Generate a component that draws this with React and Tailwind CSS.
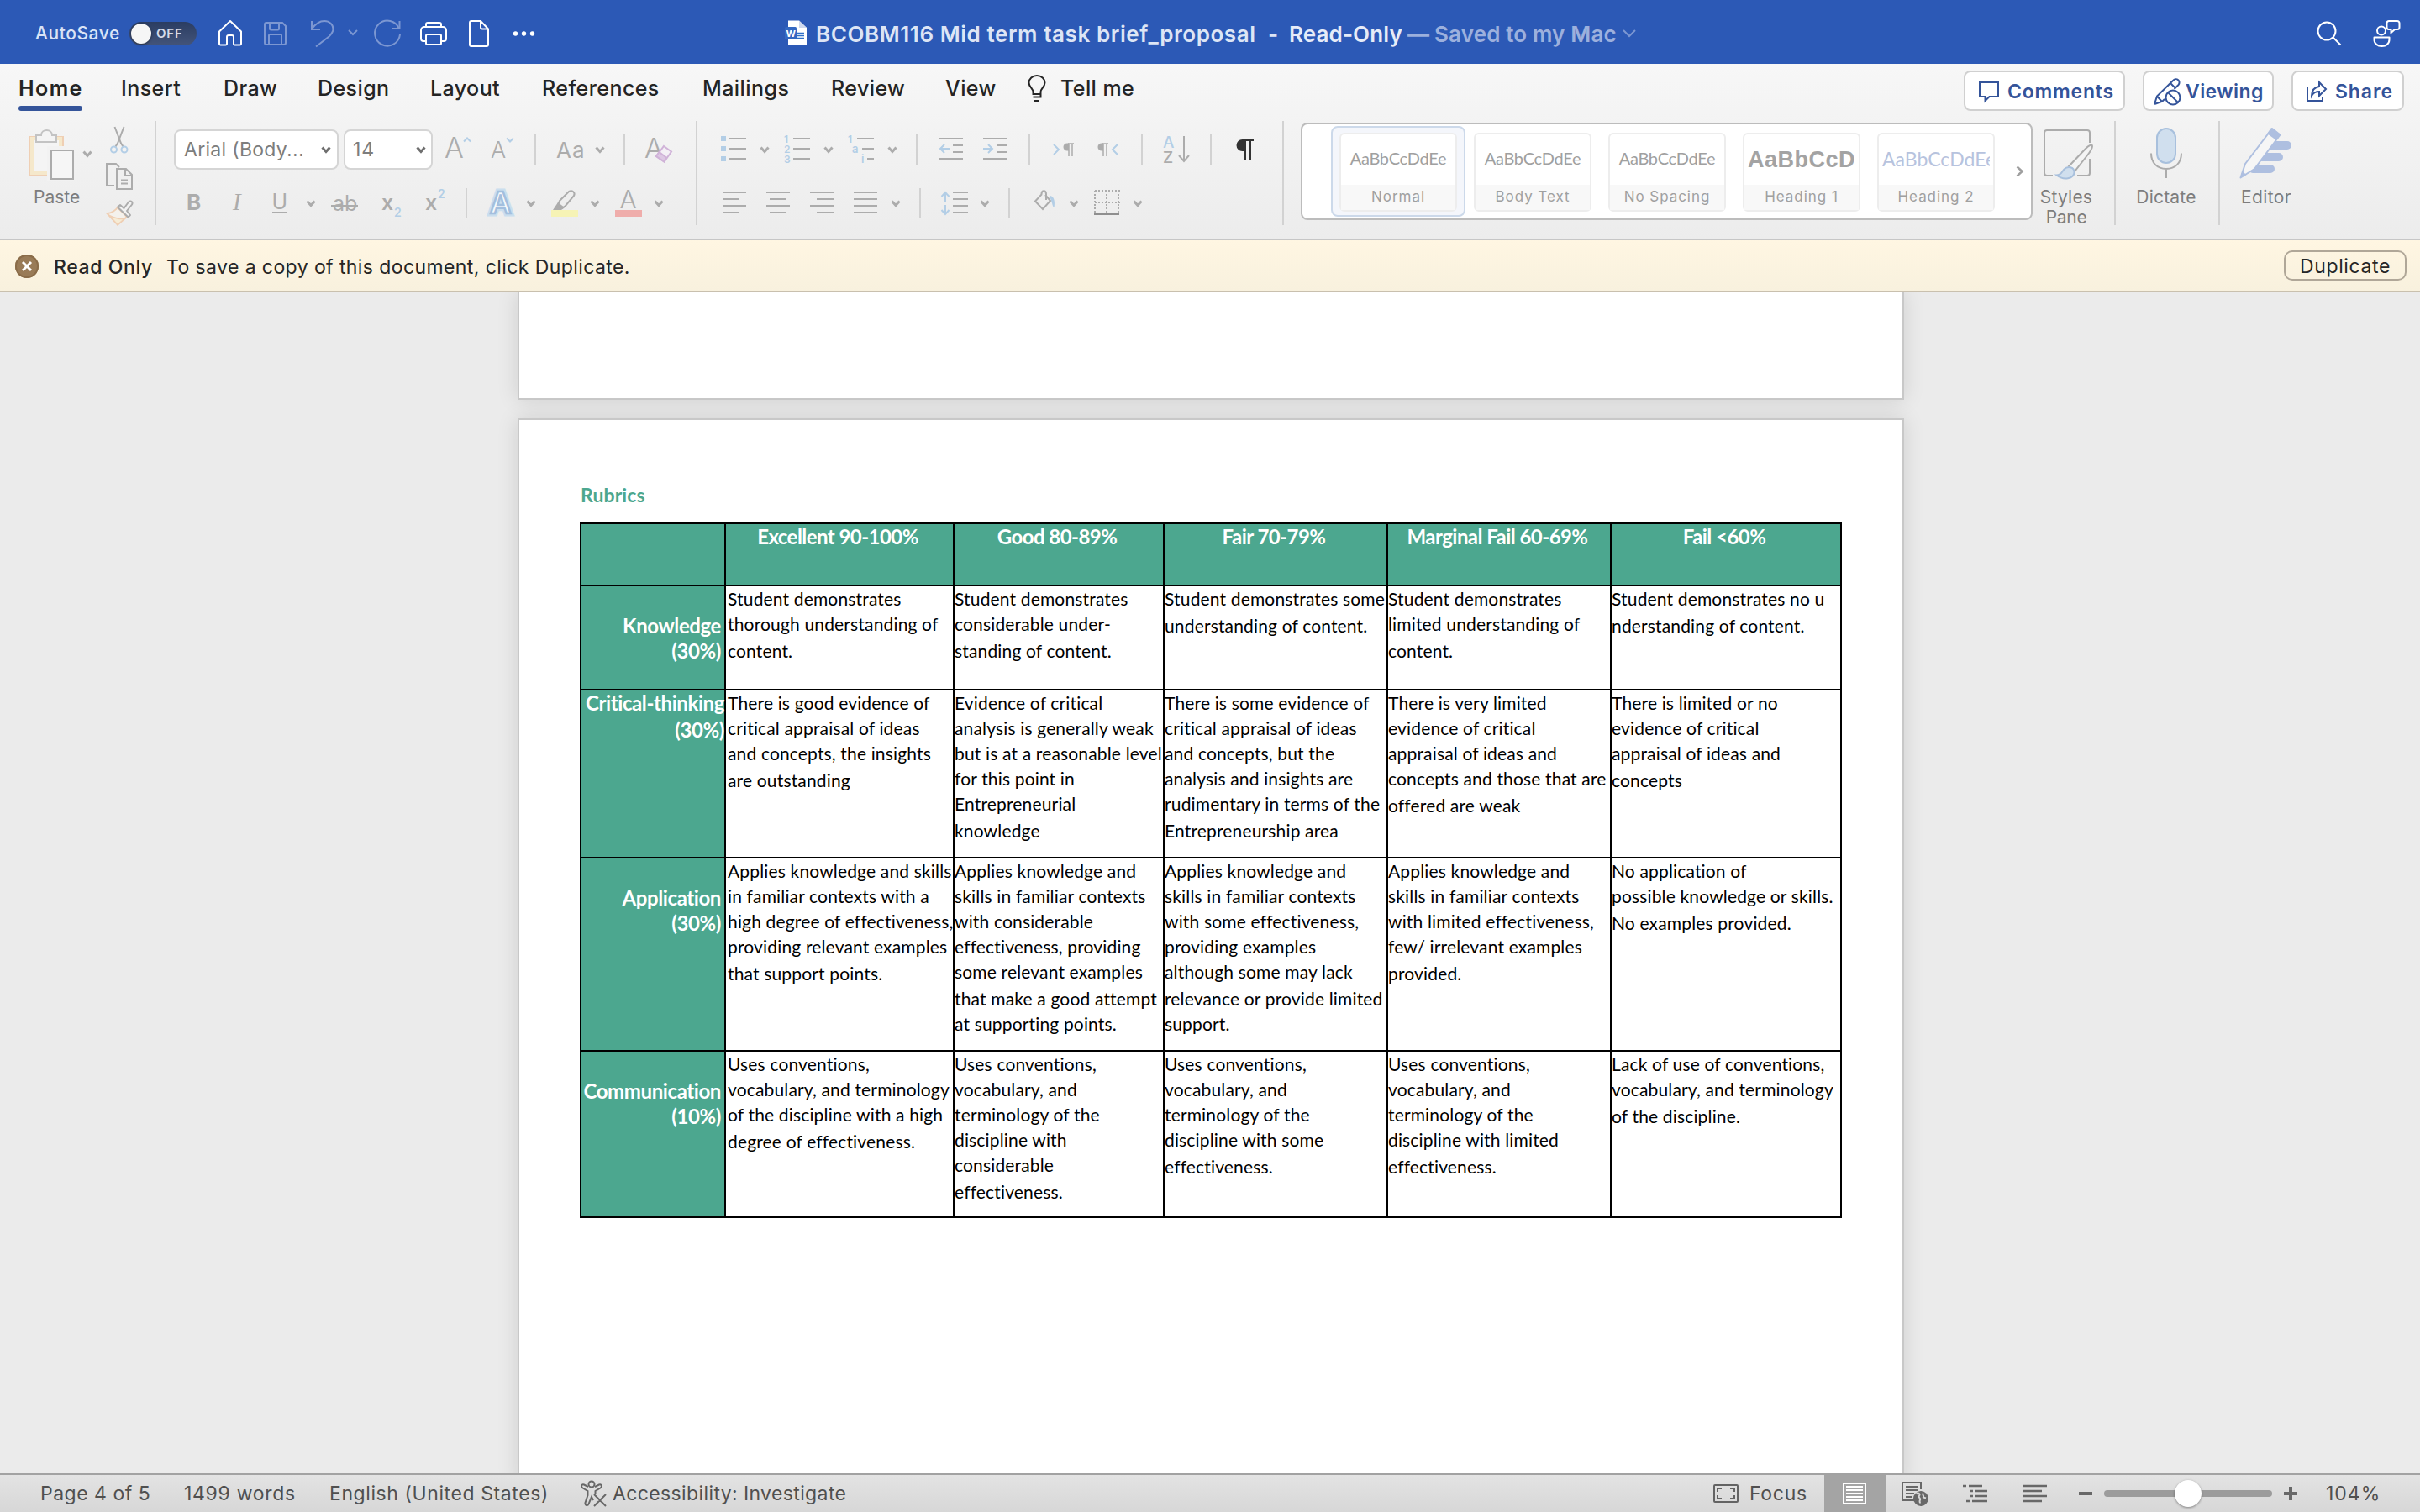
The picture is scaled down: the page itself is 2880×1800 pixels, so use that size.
const GREY = "#acacac";
const BLUE = "#b3cee6";

const columns = ["", "Excellent 90-100%", "Good 80-89%", "Fair 70-79%", "Marginal Fail 60-69%", "Fail <60%"];

// Every cell is a list of paragraphs, every paragraph a list of lines
const rubric = [
  {
    name: ["Knowledge", "(30%)"],
    height: "h-[124px]",
    cells: [
      [["Student demonstrates", "thorough understanding of"], ["content."]],
      [["Student demonstrates", "considerable under-"], ["standing of content."]],
      [["Student demonstrates some"], ["understanding of content."]],
      [["Student demonstrates", "limited understanding of"], ["content."]],
      [["Student demonstrates no u"], ["nderstanding of content."]],
    ],
  },
  {
    name: ["Critical-thinking", "(30%)"],
    tight: true,
    height: "h-[200px]",
    cells: [
      [["There is good evidence of", "critical appraisal of ideas", "and concepts, the insights"], ["are outstanding"]],
      [
        ["Evidence of critical", "analysis is generally weak", "but is at a reasonable level", "for this point in", "Entrepreneurial"],
        ["knowledge"],
      ],
      [
        ["There is some evidence of", "critical appraisal of ideas", "and concepts, but the", "analysis and insights are", "rudimentary in terms of the"],
        ["Entrepreneurship area"],
      ],
      [["There is very limited", "evidence of critical", "appraisal of ideas and", "concepts and those that are"], ["offered are weak"]],
      [["There is limited or no", "evidence of critical", "appraisal of ideas and"], ["concepts"]],
    ],
  },
  {
    name: ["Application", "(30%)"],
    height: "h-[230px]",
    cells: [
      [
        ["Applies knowledge and skills", "in familiar contexts with a", "high degree of effectiveness,", "providing relevant examples"],
        ["that support points."],
      ],
      [
        ["Applies knowledge and", "skills in familiar contexts", "with considerable", "effectiveness, providing", "some relevant examples"],
        ["that make a good attempt", "at supporting points."],
      ],
      [
        ["Applies knowledge and", "skills in familiar contexts", "with some effectiveness,", "providing examples", "although some may lack"],
        ["relevance or provide limited", "support."],
      ],
      [["Applies knowledge and", "skills in familiar contexts", "with limited effectiveness,", "few/ irrelevant examples"], ["provided."]],
      [["No application of", "possible knowledge or skills."], ["No examples provided."]],
    ],
  },
  {
    name: ["Communication", "(10%)"],
    height: "h-[198px]",
    cells: [
      [["Uses conventions,", "vocabulary, and terminology", "of the discipline with a high"], ["degree of effectiveness."]],
      [["Uses conventions,", "vocabulary, and", "terminology of the", "discipline with", "considerable"], ["effectiveness."]],
      [["Uses conventions,", "vocabulary, and", "terminology of the", "discipline with some"], ["effectiveness."]],
      [["Uses conventions,", "vocabulary, and", "terminology of the", "discipline with limited"], ["effectiveness."]],
      [["Lack of use of conventions,", "vocabulary, and terminology"], ["of the discipline."]],
    ],
  },
];

const Icon = ({ className = "", w = 32, h = 32, stroke = GREY, sw = 2, children }) => (
  <svg
    width={w}
    height={h}
    viewBox={`0 0 ${w} ${h}`}
    fill="none"
    stroke={stroke}
    strokeWidth={sw}
    className={`shrink-0 overflow-visible ${className}`}
  >
    {children}
  </svg>
);

const Glyph = ({ x, y, size, fill = GREY, weight = 400, family = "Inter", italic, children }) => (
  <text
    x={x}
    y={y}
    fontSize={size}
    fill={fill}
    stroke="none"
    fontWeight={weight}
    fontFamily={family}
    fontStyle={italic ? "italic" : "normal"}
  >
    {children}
  </text>
);

const Chevron = ({ className = "", stroke = GREY }) => (
  <Icon w={12} h={12} stroke={stroke} sw={3} className={className}>
    <path d="M1.5 3.5 6 8.5l4.5-5" />
  </Icon>
);

const Rule = ({ className = "" }) => <div className={`h-9 w-0.5 shrink-0 bg-[#d2d2d2] ${className}`} />;

const GroupRule = ({ className = "" }) => <div className={`h-[124px] w-0.5 shrink-0 bg-[#d2d2d2] ${className}`} />;

const TitleBar = () => (
  <header className="flex h-[76px] items-center bg-[#2c59b6] pt-1 pr-6 pl-[42px] text-[26px] leading-8 font-semibold whitespace-nowrap">
    <span className="w-28 text-[21px] font-medium tracking-[0.57px] text-[#dae3f5]">AutoSave</span>
    <div className="flex h-7 w-20 items-center rounded-full bg-linear-to-b from-[#2b3d62] to-[#43547a] pl-0.5">
      <div className="size-6 rounded-full bg-[#f6f6f6] shadow-[0_1px_3px_rgba(0,0,0,0.5)]" />
      <span className="ml-1.5 text-[15px] tracking-[0.8px] text-[#d5dbe8]">OFF</span>
    </div>

    <Icon stroke="#fff" className="ml-6">
      <path d="M3 13.5 16 1l13 12.5V28a1.5 1.5 0 0 1-1.500 1.500H21.500A1.500 1.500 0 0 1 20 28v-8a2 2 0 0 0-2-2h-4a2 2 0 0 0-2 2v8a1.500 1.500 0 0 1-1.500 1.500H4.500A1.500 1.500 0 0 1 3 28z" strokeLinejoin="round" />
    </Icon>
    <Icon stroke="#7c97d2" className="ml-[22px]">
      <path d="M5 3h19l4 4v20a2 2 0 0 1-2 2H5a2 2 0 0 1-2-2V5a2 2 0 0 1 2-2z" />
      <path d="M9 3v7a1.500 1.500 0 0 0 1.500 1.500h8A1.500 1.500 0 0 0 20 10V3M8 29V18a1 1 0 0 1 1-1h13a1 1 0 0 1 1 1v11" />
    </Icon>
    <Icon stroke="#7c97d2" className="ml-6">
      <path d="M3 1v10h10" />
      <path d="M3 10.500C7 5 12 1 18 1c6 0 10.500 4 10.500 9.500 0 4-2.500 6.500-5 9L8 31.500" />
    </Icon>
    <Icon w={12} h={12} stroke="#7c97d2" className="ml-3.5">
      <path d="m1 2 5 5 5-5" />
    </Icon>
    <Icon stroke="#7c97d2" className="ml-[19px]">
      <path d="M30.500 1v9h-9" />
      <path d="M30 10A15 15 0 1 0 31 17" />
    </Icon>
    <Icon stroke="#fff" className="ml-[23px]">
      <path d="M7 9V5a2 2 0 0 1 2-2h14a2 2 0 0 1 2 2v4M7 25H4a3 3 0 0 1-3-3V12a4 4 0 0 1 4-4h22a4 4 0 0 1 4 4v10a3 3 0 0 1-3 3h-3" />
      <rect x="7" y="17" width="18" height="12" rx="1.500" />
    </Icon>
    <Icon stroke="#fff" className="ml-[22px]">
      <path d="M7 1h11l9 9.500V29a2 2 0 0 1-2 2H7a2 2 0 0 1-2-2V3a2 2 0 0 1 2-2zM18 1v7.500a2 2 0 0 0 2 2h7" />
    </Icon>
    <Icon stroke="none" className="ml-[22px]">
      <g fill="#fff">
        <circle cx="5.500" cy="16" r="2.700" />
        <circle cx="15.500" cy="16" r="2.700" />
        <circle cx="25.500" cy="16" r="2.700" />
      </g>
    </Icon>

    <Icon w={26} stroke="none" className="ml-[294px]">
      <path d="M4 0.500h13l9 8.500v21H4z" fill="#fff" />
      <path d="M17 0.500V9h9z" fill="#cfd9ee" />
      <path d="M15 15.500h8M15 18.500h8M15 21.500h8" stroke="#2f6fc8" strokeWidth="1.500" />
      <rect x="0" y="8" width="14" height="15" rx="1.500" fill="#3468c2" />
      <Glyph x="1.500" y="19.500" size="11" weight="700" fill="#fff">W</Glyph>
    </Icon>
    <span className="ml-[11px] w-[538px] pt-px tracking-[0.57px] text-[#dde5f5]">BCOBM116 Mid term task brief_proposal</span>
    <span className="w-[25px] pt-px text-[#dde5f5]">-</span>
    <span className="w-[141px] pt-px tracking-[0.12px] text-[#e6ecf8]">Read-Only</span>
    <span className="w-8 pt-px text-[#9cb0dd]">—</span>
    <span className="w-[223px] pt-px tracking-[0.15px] text-[#9cb0dd]">Saved to my Mac</span>
    <Icon w={18} h={12} stroke="#7c97d2">
      <path d="m2 2 7 7 7-7" />
    </Icon>

    <Icon stroke="#fff" className="ml-auto">
      <circle cx="13" cy="13" r="10.500" />
      <path d="m20.500 20.500 9 9" />
    </Icon>
    <Icon stroke="#fff" className="ml-9">
      <circle cx="10" cy="12.500" r="5" />
      <path d="M1.500 20.500h18v2.500c0 5-4 8-9 8s-9-3-9-8z" strokeLinejoin="round" />
      <path d="M19 1h10a2.500 2.500 0 0 1 2.500 2.500v5A2.500 2.500 0 0 1 29 11h-3l-4.500 4v-4H19a2.500 2.500 0 0 1-2.500-2.500v-5A2.500 2.500 0 0 1 19 1z" />
    </Icon>
  </header>
);

const Tab = ({ className, children }) => (
  <span className={`shrink-0 tracking-[0.42px] ${className}`}>{children}</span>
);

const ActionButton = ({ className, children }) => (
  <button
    className={`flex h-12 shrink-0 items-center rounded-lg border-2 border-[#d0d0d0] bg-white pt-0.5 text-[23px] font-semibold text-[#34549a] ${className}`}
  >
    {children}
  </button>
);

const Tabs = () => (
  <nav className="flex h-[68px] items-start pr-[19px] pl-[22px] text-[25px] leading-8 font-medium whitespace-nowrap text-[#242424]">
    <div className="flex pt-[13px]">
      <div className="w-[122px] font-semibold">
        <span className="block tracking-[1.4px]">Home</span>
        <div className="mt-[5px] h-1.5 w-[76px] rounded-full bg-[#34549a]" />
      </div>
      <Tab className="w-[122px]">Insert</Tab>
      <Tab className="w-28">Draw</Tab>
      <Tab className="w-[134px]">Design</Tab>
      <Tab className="w-[133px]">Layout</Tab>
      <Tab className="w-[191px]">References</Tab>
      <Tab className="w-[153px]">Mailings</Tab>
      <Tab className="w-[136px]">Review</Tab>
      <Tab className="w-[98px]">View</Tab>
      <Icon w={22} stroke="#242424" className="mr-[17px]">
        <path d="M6.500 23v-2.500C6.500 16 1.500 14.500 1.500 9.500a9.500 8.500 0 0 1 19 0c0 5-5 6.500-5 11V23zM6.500 26.500h9V23M8 31h6" />
      </Icon>
      <Tab className="w-[90px]">Tell me</Tab>
    </div>

    <div className="ml-auto flex gap-[21px] pt-2">
      <ActionButton className="w-48 gap-2.5 pl-4 tracking-[0.8px]">
        <Icon w={24} h={26} stroke="#34549a">
          <path d="M1 2h22v17H12.500l-5 5v-5H1z" />
        </Icon>
        Comments
      </ActionButton>
      <ActionButton className="w-[156px] gap-1.5 pl-[11px] tracking-[0.43px]">
        <Icon stroke="#34549a">
          <path d="M1 31 4 21.500 23.500 2.500a4 4 0 0 1 6 5.500l-5 5M1 31l9-3 3-3M4 21.500l6 6.500M20 6l6 6" />
          <circle cx="23" cy="23" r="8.500" />
          <path d="m17 17 12 12" />
        </Icon>
        Viewing
      </ActionButton>
      <ActionButton className="w-[134px] gap-2.5 pl-4 tracking-[0.9px]">
        <Icon w={24} h={26} stroke="#34549a">
          <path d="M1 8v16h18v-5" />
          <path d="M15 2v5C9 8 6 12 6 18c2-3.500 5-5 9-5v5l8-8z" />
        </Icon>
        Share
      </ActionButton>
    </div>
  </nav>
);

const PasteGroup = () => (
  <div className="flex w-[184px] shrink-0">
    <div className="ml-[30px] flex w-[66px] flex-col items-start pt-2">
      <Icon w={64} h={64}>
        <rect x="5" y="11" width="40" height="46" fill="#f4f4f4" stroke="#efcfb4" />
        <rect x="8" y="13" width="34" height="41" stroke="#f5e8cb" strokeWidth="4" />
        <rect x="26" y="22" width="32" height="42" fill="#f2f2f2" stroke="none" />
        <path d="M13 9h6c0-8 13-8 13 0h5v8H13z" fill="#f4f4f4" stroke="#c3c3c3" />
        <rect x="31" y="27" width="26" height="34" fill="#f6f6f6" />
      </Icon>
      <span className="mt-[7px] ml-2.5 text-[21px] leading-6 text-[#7d7d7d]">Paste</span>
    </div>
    <Chevron className="mt-[33px] ml-0.5" />
    <div className="ml-4 flex flex-col gap-3 pt-1.5">
      <Icon>
        <path d="M10.500 1 18 20.500 20.500 24.500M21.500 1 14 20.500 11.500 24.500" />
        <circle cx="9.500" cy="28" r="3.500" stroke={BLUE} />
        <circle cx="22" cy="28" r="3.500" stroke={BLUE} />
      </Icon>
      <Icon>
        <path d="M10 27H1V1h11l4 4" />
        <path d="M13 7h11l7 7v17H13zM23 7v8h8M18 20.500h8M18 24.500h8" />
      </Icon>
      <Icon>
        <path d="M14 9C11 13 7 15.500 1.500 16L14 29.500l11-9.500z" fill="#f4f1ec" stroke="#efcfb4" />
        <path d="M4 18.500c5 2.500 11 4.500 18 4l-8 7z" fill="#f6ecd6" stroke="#efcfb4" strokeWidth="1.500" />
        <path d="m14 8.500 3-2.500 4.500 4 5.500-7.500c3-2.500 5.500 0 4 3L25 13l4 5-2.500 2.500z" fill="#f2f2f2" strokeLinejoin="round" />
      </Icon>
    </div>
  </div>
);

const FontGroup = () => (
  <div className="flex w-[642px] shrink-0 flex-col text-[23px] text-[#7d7d7d]">
    <div className="mt-2.5 flex h-12 items-center pl-[21px]">
      <div className="flex h-12 w-[196px] items-center justify-between rounded-lg border-2 border-[#d5d5d5] bg-white pr-[7px] pl-2.5 tracking-[0.3px]">
        Arial (Body...
        <Chevron stroke="#6f6f6f" />
      </div>
      <div className="ml-1.5 flex h-12 w-[106px] items-center justify-between rounded-lg border-2 border-[#d5d5d5] bg-white pr-1.5 pl-[9px] tracking-[0.8px]">
        14
        <Chevron stroke="#6f6f6f" />
      </div>
      <Icon className="ml-3.5">
        <Glyph x="0" y="26" size="34" weight="300">A</Glyph>
        <path d="m23 6.500 4-4 4 4" stroke={BLUE} />
      </Icon>
      <Icon className="ml-[22px]">
        <Glyph x="1" y="26" size="27" weight="300">A</Glyph>
        <path d="m20 2.500 4 4 4-4" stroke={BLUE} />
      </Icon>
      <Rule className="ml-[21px]" />
      <Icon w={36} className="ml-6">
        <Glyph x="0" y="26" size="26">A</Glyph>
        <Glyph x="19" y="26" size="26">a</Glyph>
      </Icon>
      <Chevron className="ml-2.5" />
      <Rule className="ml-[22px]" />
      <Icon className="ml-6">
        <Glyph x="-1" y="26" size="33" weight="300">A</Glyph>
        <path d="m22 12 9 6.500-8.500 12L13 24z" fill="#f4f0f5" stroke="#d0b3d8" />
        <path d="m16.500 19 8.500 6.500-2.500 5L13 24z" fill="#ddc8e3" stroke="#d0b3d8" />
      </Icon>
    </div>

    <div className="mt-[22px] flex h-9 items-center pl-7">
      <Icon>
        <Glyph x="8" y="24" size="26" weight="700">B</Glyph>
      </Icon>
      <Icon className="ml-5">
        <Glyph x="11" y="24" size="29" italic family="Liberation Serif">I</Glyph>
      </Icon>
      <Icon className="ml-[19px]">
        <Glyph x="6.500" y="23" size="25">U</Glyph>
        <path d="M7 27h18" />
      </Icon>
      <Chevron className="ml-[15px]" />
      <Icon className="ml-[18px]">
        <Glyph x="2" y="25" size="25">ab</Glyph>
        <path d="M0 19h32" />
      </Icon>
      <Icon className="ml-[25px]">
        <Glyph x="3" y="24" size="25" weight="600">x</Glyph>
        <Glyph x="18" y="32" size="14" fill={BLUE} weight="600">2</Glyph>
      </Icon>
      <Icon className="ml-5">
        <Glyph x="3" y="24" size="25" weight="600">x</Glyph>
        <Glyph x="18" y="10" size="14" fill={BLUE} weight="600">2</Glyph>
      </Icon>
      <Rule className="ml-[19px]" />
      <Icon className="ml-6">
        <text x="3" y="28" fontSize="35" fontFamily="Inter" fontWeight="600" fill="none" stroke="#cadeee" strokeWidth="7">A</text>
        <text x="3" y="28" fontSize="35" fontFamily="Inter" fontWeight="600" fill="#f7f9fb" stroke="#a3bfde" strokeWidth="2.500">A</text>
      </Icon>
      <Chevron className="ml-3.5" />
      <Icon className="ml-[18px]">
        <path d="m10 13 11-11c4-2 8 1 6 5L17 19l-4 3-5-4z" />
        <path d="m8 15 8 6-4 3H2z" fill={GREY} stroke="none" />
        <rect x="0" y="24" width="32" height="8" fill="#f6f3b5" stroke="none" />
      </Icon>
      <Chevron className="ml-3.5" />
      <Icon className="ml-[18px]">
        <Glyph x="5.500" y="21.500" size="30" weight="300">A</Glyph>
        <rect x="0" y="24" width="32" height="8" fill="#efadab" stroke="none" />
      </Icon>
      <Chevron className="ml-3.5" />
    </div>
  </div>
);

const ParagraphGroup = () => (
  <div className="flex w-[696px] shrink-0 flex-col">
    <div className="mt-2.5 flex h-12 items-center pl-7">
      <Icon>
        <path d="M10 3h20M10 15h20M10 27h20" />
        <path d="M0 3h6M0 15h6M0 27h6" stroke={BLUE} strokeWidth="6" />
      </Icon>
      <Chevron className="ml-3.5" />
      <Icon className="ml-[17px]">
        <path d="M11 3h20M11 15h20M11 27h20" />
        <Glyph x="0" y="8" size="12" weight="600" fill={BLUE}>1</Glyph>
        <Glyph x="0" y="20" size="12" weight="600" fill={BLUE}>2</Glyph>
        <Glyph x="0" y="32" size="12" weight="600" fill={BLUE}>3</Glyph>
      </Icon>
      <Chevron className="ml-[15px]" />
      <Icon className="ml-[17px]">
        <path d="M11 3h20M17 15h14M23 27h8" />
        <Glyph x="0" y="8" size="12" weight="600" fill={BLUE}>1</Glyph>
        <Glyph x="5" y="20" size="13" weight="600" fill={BLUE}>a</Glyph>
        <Glyph x="16" y="32" size="13" weight="600" fill={BLUE}>i</Glyph>
      </Icon>
      <Chevron className="ml-[15px]" />
      <Rule className="ml-[22px]" />
      <Icon className="ml-6">
        <path d="M2 3h28M18 11h12M18 19h12M2 27h28" />
        <path d="M14 15H3m5-5-5 5 5 5" stroke={BLUE} />
      </Icon>
      <Icon className="ml-5">
        <path d="M2 3h28M18 11h12M18 19h12M2 27h28" />
        <path d="M2 15h11m-5-5 5 5-5 5" stroke={BLUE} />
      </Icon>
      <Rule className="ml-6" />
      <Icon className="ml-[26px]">
        <path d="m2 10 6 6-6 6" stroke={BLUE} />
        <path d="M26 9h-7M24 9v15M20 9v15" strokeWidth="1.500" />
        <path d="M20 8.500h-2a4.500 4.500 0 0 0 0 9h2z" fill={GREY} stroke="none" />
      </Icon>
      <Icon className="ml-5">
        <path d="m26 10-6 6 6 6" stroke={BLUE} />
        <path d="M15 9H8M13 9v15M9 9v15" strokeWidth="1.500" />
        <path d="M9 8.500H7a4.500 4.500 0 0 0 0 9h2z" fill={GREY} stroke="none" />
      </Icon>
      <Rule className="ml-[22px]" />
      <Icon className="ml-6">
        <Glyph x="0" y="14" size="19" fill={BLUE} weight="500">A</Glyph>
        <Glyph x="0" y="32" size="19" weight="500">Z</Glyph>
        <path d="M25 0v30m-6-7 6 7 6-7" />
      </Icon>
      <Rule className="ml-6" />
      <Icon className="ml-6" stroke="#333">
        <path d="M26 5H13M16 4v24M22 4v24" />
        <path d="M16 4h-3.500a7 7 0 0 0 0 14H16z" fill="#333" stroke="none" />
      </Icon>
    </div>

    <div className="mt-[22px] flex h-9 items-center pl-7">
      <Icon>
        <path d="M2 3h28M2 11h20M2 19h28M2 27h20" />
      </Icon>
      <Icon className="ml-5">
        <path d="M2 3h28M6 11h20M2 19h28M6 27h20" />
      </Icon>
      <Icon className="ml-5">
        <path d="M2 3h28M10 11h20M2 19h28M10 27h20" />
      </Icon>
      <Icon className="ml-5">
        <path d="M2 3h28M2 11h28M2 19h28M2 27h28" />
      </Icon>
      <Chevron className="ml-3.5" />
      <Rule className="ml-[22px]" />
      <Icon className="ml-6">
        <path d="M14 3h18M14 11h18M14 19h18M14 27h18" />
        <path d="M5 14V3M0.500 8 5 3l4.500 5M5 18v11m-4.500-5L5 29l4.500-5" stroke={BLUE} />
      </Icon>
      <Chevron className="ml-3.5" />
      <Rule className="ml-[22px]" />
      <Icon className="ml-[26px]">
        <path d="M12 5 4 13.500l9 9.500 9-10-6-7M11.500 5c0-5 5.500-5 5.500 0v7" />
        <path d="M21 7c5 0 7 6 5.500 14-2-1-2-5-3.500-8z" fill={BLUE} stroke="none" />
      </Icon>
      <Chevron className="ml-3" />
      <Icon className="ml-[18px]">
        <path d="M1 1h30M1 15h30M1 1v26M15 1v26M29 1v26" strokeDasharray="2 2" />
        <path d="M0 29h30" stroke="#8f8f8f" />
      </Icon>
      <Chevron className="ml-3.5" />
    </div>
  </div>
);

const StyleCard = ({ label, selected, sampleClass, children }) => (
  <div
    className={`h-[108px] w-40 shrink-0 rounded-lg border-2 px-2 pt-1.5 ${
      selected ? "border-[#ccd9ea] bg-[#f4f6fb]" : "border-transparent"
    }`}
  >
    <div className="flex h-[94px] w-[140px] flex-col rounded-md border-2 border-[#ededed] bg-white">
      <div className={`mx-1 flex h-[60px] items-center overflow-hidden whitespace-nowrap ${sampleClass}`}>{children}</div>
      <div className="h-[30px] bg-[#f8f8f8] text-center text-[17px] leading-[28px] tracking-[0.95px] text-[#a0a0a0]">
        {label}
      </div>
    </div>
  </div>
);

const StylesGallery = () => (
  <div className="mt-0.5 ml-5 flex h-[116px] w-[871px] shrink-0 rounded-lg border-2 border-[#bcbcbc] bg-white pt-0.5 pl-[34px]">
    <StyleCard label="Normal" selected sampleClass="justify-center pb-1 font-['Lato'] text-[20px] tracking-[-0.3px] text-[#a0a0a0]">AaBbCcDdEe</StyleCard>
    <StyleCard label="Body Text" sampleClass="justify-center pb-1 font-['Lato'] text-[20px] tracking-[-0.3px] text-[#a0a0a0]">AaBbCcDdEe</StyleCard>
    <StyleCard label="No Spacing" sampleClass="justify-center pb-1 font-['Lato'] text-[20px] tracking-[-0.3px] text-[#a0a0a0]">AaBbCcDdEe</StyleCard>
    <StyleCard label="Heading 1" sampleClass="font-['Liberation_Sans'] text-[27px] font-bold tracking-[0.5px] text-[#a3a3a3]">AaBbCcD</StyleCard>
    <StyleCard label="Heading 2" sampleClass="pb-0.5 font-['Lato'] text-[23px] text-[#b7c3de]">AaBbCcDdEe</StyleCard>
    <Icon w={12} h={16} stroke="#9f9f9f" className="mt-[46px] ml-3.5" sw={2.5}>
      <path d="m2.500 2.500 6 5.500-6 5.500" />
    </Icon>
  </div>
);

const BigButton = ({ className, w = 64, icon, children }) => (
  <div className={`flex shrink-0 flex-col items-center pt-2 text-center text-[21px] leading-6 text-[#7d7d7d] ${className}`}>
    <Icon w={w} h={64} className="mb-[7px]">
      {icon}
    </Icon>
    {children}
  </div>
);

const Ribbon = () => (
  <div className="flex h-[142px] items-start border-b-2 border-[#c6c6c6]">
    <PasteGroup />
    <GroupRule />
    <FontGroup />
    <GroupRule />
    <ParagraphGroup />
    <GroupRule />
    <StylesGallery />
    <BigButton
      className="w-20"
      w={66}
      icon={
        <>
          <path d="M61 18V6a3 3 0 0 0-3-3H10a3 3 0 0 0-3 3v48a3 3 0 0 0 3 3h7M61 37v17a3 3 0 0 1-3 3H46" />
          <path d="M36 46 56 25c4-4 8-6 8-3s-2 6-6 11L43 52z" fill="#f4f4f4" />
          <path d="M21.500 56.500c6 0 6-4 9-7 4-4 12-3 12 3.500 0 8-13 10-21 3.500z" fill="#d0dfee" stroke="#a8c0dd" />
        </>
      }
    >
      <span className="tracking-[0.2px]">Styles</span>
      <span className="tracking-[-0.3px]">Pane</span>
    </BigButton>
    <GroupRule className="ml-[17px]" />
    <BigButton
      className="w-[122px] pr-0.5"
      icon={
        <>
          <rect x="21" y="1" width="22" height="41" rx="11" fill="#d0dfee" stroke="#a8c0dd" />
          <path d="M14 30.500c0 11 7 18.500 18 18.500s18-7.500 18-18.500M32 50v10" />
        </>
      }
    >
      <span className="tracking-[0.2px]">Dictate</span>
    </BigButton>
    <GroupRule />
    <BigButton
      className="w-[110px]"
      icon={
        <>
          <path d="M30 21h27M24 35h23M16 49h21" stroke="#aebfe0" strokeWidth="10" strokeLinecap="round" />
          <path d="M39 1 7 43 1.500 59.500 18 49 48.500 8.500z" fill="#f6f6f6" stroke="#aebfe0" strokeLinejoin="round" />
          <path d="M38 0 49 8l-5 7-11-8zM1 60l2.500-8 5 4z" fill="#aebfe0" stroke="none" />
        </>
      }
    >
      <span className="tracking-[0.4px]">Editor</span>
    </BigButton>
  </div>
);

const ReadOnlyNotice = () => (
  <div className="flex h-[62px] items-center border-b-2 border-[#c9c0ae] bg-linear-to-b from-[#fff6e2] to-[#f8f1de] pt-1 pr-4 pl-[18px] text-[23px] leading-8 whitespace-nowrap text-[#262626]">
    <div className="mb-0.5 flex size-7 items-center justify-center rounded-full bg-[#997b57] ring-2 ring-[#8a6c49] ring-inset">
      <Icon w={14} h={14} stroke="#fff" sw={3}>
        <path d="m2 2 10 10M12 2 2 12" />
      </Icon>
    </div>
    <span className="ml-[18px] w-[134px] font-medium tracking-[0.6px]">Read Only</span>
    <span className="tracking-[0.41px]">To save a copy of this document, click Duplicate.</span>
    <button className="mb-1 ml-auto h-9 w-[146px] rounded-[10px] border-2 border-[#b0a798] leading-[34px] tracking-[0.6px]">
      Duplicate
    </button>
  </div>
);

const CellText = ({ paragraphs }) => (
  <div className="text-[21px] leading-[30px] tracking-[0.16px]">
    {paragraphs.map((lines, i) => (
      <div key={i} className={i > 0 ? "mt-0.5" : ""}>
        {lines.map((line) => (
          <div key={line}>{line}</div>
        ))}
      </div>
    ))}
  </div>
);

const COLS = "grid grid-cols-[172px_272px_250px_266px_266px_274px]";
const CELL = "border-r-2 border-b-2 border-black";

const RubricTable = () => (
  <div className="mt-[18px] ml-[72px] w-[1502px] border-t-2 border-l-2 border-black">
    <div className={`${COLS} h-[74px]`}>
      {columns.map((title) => (
        <div
          key={title}
          className={`${CELL} bg-[#4ca78f] pr-1 text-center text-[24px] leading-[30px] font-bold tracking-[-0.55px] text-white`}
        >
          {title}
        </div>
      ))}
    </div>
    {rubric.map((row) => (
      <div key={row.name[0]} className={`${COLS} ${row.height}`}>
        <div
          className={`${CELL} bg-[#4ca78f] text-right text-[24px] leading-[30px] font-bold tracking-[-0.4px] text-white ${
            row.tight ? "" : "pt-8 pr-1"
          }`}
        >
          <div>{row.name[0]}</div>
          <div className={row.tight ? "mt-0.5" : ""}>{row.name[1]}</div>
        </div>
        {row.cells.map((paragraphs, i) => (
          <div key={i} className={`${CELL} ${i === 0 ? "pl-0.5" : ""}`}>
            <CellText paragraphs={paragraphs} />
          </div>
        ))}
      </div>
    ))}
  </div>
);

const Document = () => (
  <main className="h-[1406px] overflow-hidden bg-[#ebebeb] pl-[616px] font-['Lato'] whitespace-nowrap text-black">
    <div className="h-32 w-[1650px] border-2 border-t-0 border-[#c8c8c8] bg-white shadow-[0_0_24px_rgba(0,0,0,0.12)]" />
    <div className="mt-[22px] h-[1270px] w-[1650px] border-2 border-[#c8c8c8] bg-white pt-[74px] shadow-[0_0_24px_rgba(0,0,0,0.12)]">
      <h1 className="ml-[73px] text-[23px] leading-[30px] font-bold tracking-[0.1px] text-[#4ca78f]">Rubrics</h1>
      <RubricTable />
    </div>
  </main>
);

const StatusBar = () => (
  <footer className="flex h-[46px] items-center border-t-2 border-[#a2a2a2] bg-linear-to-b from-[#e3e3e3] to-[#d7d7d7] pl-12 text-[23px] leading-8 whitespace-nowrap text-[#505050]">
    <span className="w-[171px] tracking-[0.5px]">Page 4 of 5</span>
    <span className="w-[173px] tracking-[0.7px]">1499 words</span>
    <span className="w-[298px] tracking-[0.59px]">English (United States)</span>
    <Icon stroke="#686868">
      <circle cx="14" cy="5" r="3.500" />
      <path d="M10 8 5 5.500C2 4.500 1 8 3.500 9.500L9.500 13v5L6.500 27c-.5 3.500 3 4 4 1.500L14 20l2 4M18 8l5-2.500c3-1 4 2.500 1.500 4L18.500 13v4M17 17l14 14M31 17 17 31" />
    </Icon>
    <span className="ml-[7px] tracking-[0.38px]">Accessibility: Investigate</span>

    <div className="ml-auto flex h-full shrink-0 items-center">
      <Icon w={30} h={22} stroke="#636363">
        <rect x="1" y="1" width="28" height="20" rx="1" />
        <path d="M5 9V5h5M20 5h5v4M25 13v4h-5M10 17H5v-4" />
      </Icon>
      <span className="ml-[13px] w-[89px] tracking-[0.7px]">Focus</span>
      <div className="flex h-full w-[74px] items-center justify-center bg-[#a4a4a4]">
        <Icon w={28} h={26} className="-translate-x-px">
          <rect x="1" y="1" width="26" height="24" fill="#a4a4a4" stroke="#fff" />
          <path d="M4 5h20M4 9h20M4 13h20M4 17h20M4 21h20" stroke="#fff" />
        </Icon>
      </div>
      <Icon stroke="#686868" className="ml-[18px]">
        <path d="M15 24H1V3h22v8M5 8h14M5 12h14M5 16h10M5 20h8" />
        <circle cx="23" cy="22" r="9" fill="#686868" stroke="none" />
        <path d="M17.500 16.500c3-2 5 0 3.500 2s2 3 1 5 0 3 0 4M26 15.500c-2 2 1 3 0 5l3 1" stroke="#d8d8d8" />
      </Icon>
      <Icon stroke="#686868" sw={2.5} className="ml-[39px]">
        <path d="M2 7h4M9 7h16M10 13h4M17 13h14M10 19h4M17 19h14M6 25h4M13 25h18" />
      </Icon>
      <Icon stroke="#686868" sw={2.5} className="ml-10">
        <path d="M2 7h28M2 13h22M2 19h28M2 25h22" />
      </Icon>
      <div className="ml-9 h-1 w-4 bg-[#686868]" />
      <div className="relative ml-3.5 h-2 w-[200px] rounded-full bg-[#9c9c9c]">
        <div className="absolute -top-3 left-[84px] size-8 rounded-full bg-white shadow-[0_1px_3px_rgba(0,0,0,0.4)]" />
      </div>
      <Icon w={16} h={16} stroke="#686868" sw={4} className="ml-3.5">
        <path d="M0 8h16M8 0v16" />
      </Icon>
      <span className="ml-[34px] w-28 tracking-[1px]">104%</span>
    </div>
  </footer>
);

export default function App() {
  return (
    <div className="flex h-[1800px] w-[2880px] flex-col overflow-hidden font-['Inter',sans-serif]">
      <TitleBar />
      <div className="bg-linear-to-b from-[#f7f7f7] to-[#ececec]">
        <Tabs />
        <Ribbon />
      </div>
      <ReadOnlyNotice />
      <Document />
      <StatusBar />
    </div>
  );
}
